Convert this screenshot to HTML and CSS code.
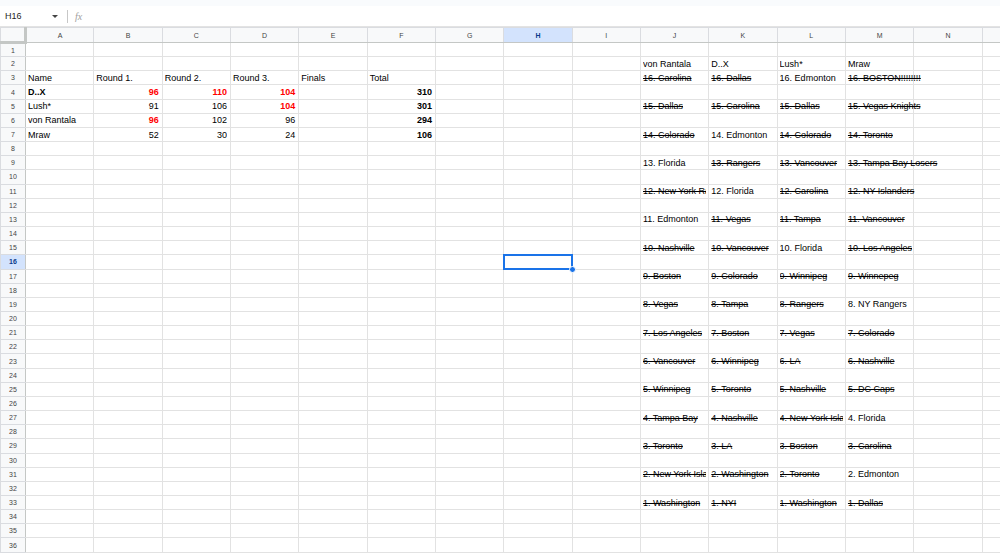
FILE: index.html
```html
<!DOCTYPE html>
<html lang="en">
<head>
  <meta charset="UTF-8">
  <meta name="viewport" content="width=device-width, initial-scale=1.0">
  <title>Playoff Picks</title>
  <link rel="stylesheet" href="styles.css">
</head>
<body>
  <div class="toolbar-edge"></div>
  <div class="formula-bar">
    <div class="name-box">H16<span class="caret"></span></div>
    <div class="fx">fx</div>
  </div>

  <table class="sheet" id="sheet"></table>

<script>
  const colNames = "ABCDEFGHIJKLMN".split("");
  const rowCount = 36;
  const selected = "H16";

  // score table
  const cells = {
    A3: "Name", B3: "Round 1.", C3: "Round 2.", D3: "Round 3.", E3: "Finals", F3: "Total",
    A4: "D..X", B4: "96", C4: "110", D4: "104", F4: "310",
    A5: "Lush*", B5: "91", C5: "106", D5: "104", F5: "301",
    A6: "von Rantala", B6: "96", C6: "102", D6: "96", F6: "294",
    A7: "Mraw", B7: "52", C7: "30", D7: "24", F7: "106"
  };
  const bold = ["A4", "F4", "F5", "F6", "F7"];
  const red = ["B4", "C4", "D4", "D5", "B6"];
  const struck = [];

  // picks, from 16 down to 1; the ones still alive are listed in "alive"
  const picks = {
    J: { name: "von Rantala", alive: [13, 11], teams: ["Carolina", "Dallas", "Colorado", "Florida", "New York Rangers", "Edmonton", "Nashville", "Boston", "Vegas", "Los Angeles", "Vancouver", "Winnipeg", "Tampa Bay", "Toronto", "New York Islanders", "Washington"] },
    K: { name: "D..X", alive: [14, 12], teams: ["Dallas", "Carolina", "Edmonton", "Rangers", "Florida", "Vegas", "Vancouver", "Colorado", "Tampa", "Boston", "Winnipeg", "Toronto", "Nashville", "LA", "Washington", "NYI"] },
    L: { name: "Lush*", alive: [16, 10], teams: ["Edmonton", "Dallas", "Colorado", "Vancouver", "Carolina", "Tampa", "Florida", "Winnipeg", "Rangers", "Vegas", "LA", "Nashville", "New York Islanders", "Boston", "Toronto", "Washington"] },
    M: { name: "Mraw", alive: [8, 4, 2], teams: ["BOSTON!!!!!!!!", "Vegas Knights", "Toronto", "Tampa Bay Losers", "NY Islanders", "Vancouver", "Los Angeles", "Winnepeg", "NY Rangers", "Colorado", "Nashville", "DC Caps", "Florida", "Carolina", "Edmonton", "Dallas"] }
  };

  Object.keys(picks).forEach(col => {
    const p = picks[col];
    cells[col + "2"] = p.name;
    p.teams.forEach((team, i) => {
      const rank = 16 - i;
      const ref = col + (3 + i * 2);
      cells[ref] = rank + ". " + team;
      if (!p.alive.includes(rank)) struck.push(ref);
    });
  });

  const sheet = document.getElementById("sheet");
  let html = "<colgroup><col class='c-head'>";
  colNames.forEach(() => { html += "<col class='c-cell'>"; });
  html += "<col class='c-cell'></colgroup>";

  html += "<tr class='col-heads'><th class='corner'></th>";
  colNames.forEach(c => {
    html += `<th class="${c === selected[0] ? "active" : ""}">${c}</th>`;
  });
  html += "<th></th></tr>";

  for (let r = 1; r <= rowCount; r++) {
    html += `<tr><th class="row-head ${"H" + r === selected ? "active" : ""}">${r}</th>`;
    colNames.forEach((c, i) => {
      const ref = c + r;
      const text = cells[ref] || "";
      const classes = [];
      if (/^\d+$/.test(text)) classes.push("num");
      if (bold.includes(ref)) classes.push("bold");
      if (red.includes(ref)) classes.push("red");
      if (struck.includes(ref)) classes.push("strike");
      if (text && cells[colNames[i + 1] + r]) classes.push("clip");
      if (ref === selected) classes.push("selected");
      html += `<td class="${classes.join(" ")}"><span>${text}</span></td>`;
    });
    html += "<td></td></tr>";
  }
  sheet.innerHTML = html;
</script>
</body>
</html>
```

FILE: styles.css
```css
body { margin: 0; font-family: 'Liberation Sans', Arial, sans-serif; background: #fff; overflow: hidden; width: 1000px; height: 554px; }

.toolbar-edge { height: 6px; background: #f9fbfd; }
.formula-bar { display: flex; align-items: center; height: 21px; background: #fff; border-bottom: 1px solid #e3e3e3; box-sizing: border-box; }
.name-box { display: flex; align-items: center; justify-content: space-between; width: 64px; padding-left: 5px; padding-right: 6px; box-sizing: border-box; font-size: 9px; color: #1f1f1f; }
.caret { width: 0; height: 0; border-left: 3px solid transparent; border-right: 3px solid transparent; border-top: 3px solid #444; }
.fx { border-left: 1px solid #c7c7c7; height: 13px; margin-left: 3px; padding-left: 7px; font-family: 'Liberation Serif', serif; font-style: italic; font-size: 10px; line-height: 13px; color: #a0a0a0; }

.sheet { border-collapse: collapse; table-layout: fixed; width: 1050px; font-size: 9px; color: #000; }
.c-head { width: 25px; }
.c-cell { width: 68.33px; }

.sheet tr { height: 14.17px; }
.sheet .col-heads { height: 15px; }

.sheet th { background: #f8f9fa; color: #444; font-weight: normal; font-size: 7px; text-align: center; padding: 0; border: 1px solid #dadce0; }
.sheet th.active { background: #d3e3fd; color: #0b3a8a; font-weight: bold; }
.sheet .corner { border-right: 3px solid #c4c7c5; border-bottom: 3px solid #c4c7c5; }
.sheet .row-head { border-right: 1px solid #c4c7c5; }
.col-heads th { border-bottom: 1px solid #c4c7c5; }

.sheet td { border: 1px solid #e2e2e2; padding: 0 2px; white-space: nowrap; overflow: visible; line-height: 12px; }
.sheet td.clip { overflow: hidden; }
.sheet td.clip span { display: block; overflow: hidden; }
.sheet td.num { text-align: right; padding-right: 3px; }
.sheet td.bold { font-weight: bold; }
.sheet td.red { color: #ff0000; font-weight: bold; }
.sheet td.strike span { text-decoration: line-through; }

.sheet td.selected { position: relative; }
.sheet td.selected::after { content: ""; position: absolute; left: -1px; top: -1px; right: -1px; bottom: -1px; border: 2px solid #1a73e8; }
.sheet td.selected::before { content: ""; position: absolute; right: -4px; bottom: -4px; width: 5px; height: 5px; background: #1a73e8; border: 1px solid #fff; border-radius: 50%; z-index: 1; }
```
